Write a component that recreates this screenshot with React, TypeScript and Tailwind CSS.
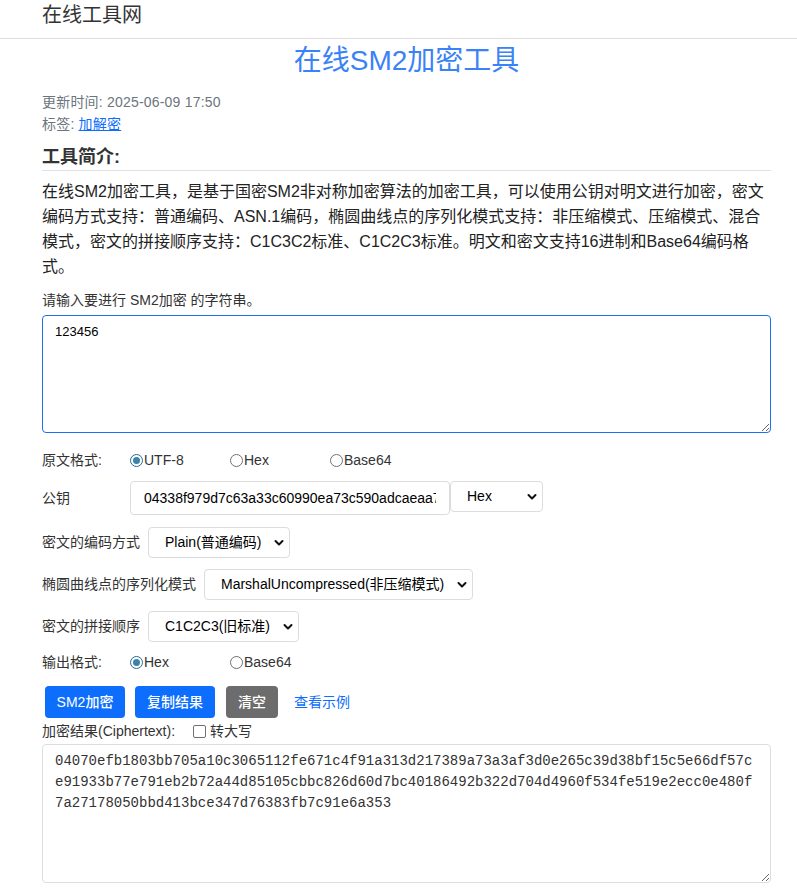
import React from 'react'

const cipher =
  '04070efb1803bb705a10c3065112fe671c4f91a313d217389a73a3af3d0e265c39d38bf15c5e66df57c\n' +
  'e91933b77e791eb2b72a44d85105cbbc826d60d7bc40186492b322d704d4960f534fe519e2ecc0e480f\n' +
  '7a27178050bbd413bce347d76383fb7c91e6a353'

function Chevron() {
  return (
    <svg className="pointer-events-none absolute right-[6px] top-1/2 -translate-y-1/2" width="10" height="7" viewBox="0 0 10 7" fill="none">
      <path d="M1.5 1.5l3.5 3.5 3.5-3.5" stroke="#111" strokeWidth="2" strokeLinecap="round" strokeLinejoin="round" />
    </svg>
  )
}

function Select({ value, width }: { value: string; width: string }) {
  return (
    <div className={`relative ${width}`}>
      <select
        defaultValue={value}
        className="h-[31px] w-full appearance-none rounded-[4px] border border-[#dcdcdc] bg-white pl-[16px] pr-[22px] text-[14px] text-black outline-none"
      >
        <option value={value}>{value}</option>
      </select>
      <Chevron />
    </div>
  )
}

function Radio({ label, checked }: { label: string; checked?: boolean }) {
  return (
    <label className="flex w-[100px] items-center">
      {checked ? (
        <span className="flex h-[13px] w-[13px] items-center justify-center rounded-full border border-[#2b6a8c] bg-white">
          <span className="h-[7px] w-[7px] rounded-full bg-[#3a83ab]" />
        </span>
      ) : (
        <span className="h-[13px] w-[13px] rounded-full border border-[#707070] bg-white" />
      )}
      <span className="ml-[1px] text-[14px] text-[#333]">{label}</span>
    </label>
  )
}

export default function App() {
  return (
    <div className="min-h-screen bg-white font-['Liberation_Sans','Noto_Sans_CJK_SC',sans-serif] text-[#212529]">
      {/* top bar */}
      <div className="h-[39px] border-b border-[#dddddd] pl-[42px]">
        <div className="text-[20px] leading-[30px] text-[#333]">在线工具网</div>
      </div>

      <div className="pl-[42px] pr-[26px]">
        <h1 className="pt-[4px] text-center text-[28px] font-normal leading-[36px] text-[#3a82f6]">在线SM2加密工具</h1>

        <div className="mt-[12px] text-[14px] leading-[22px] tracking-[0.2px] text-[#6c757d]">
          <div>更新时间: 2025-06-09 17:50</div>
          <div>
            标签: <a href="#" className="text-[#0d6efd] underline">加解密</a>
          </div>
        </div>

        <h2 className="mt-[9px] border-b border-[#dee2e6] text-[18px] font-bold leading-[26px] text-[#333]">工具简介:</h2>

        <p className="mt-[8px] whitespace-nowrap text-[16px] leading-[25px] text-[#222]">
          在线SM2加密工具，是基于国密SM2非对称加密算法的加密工具，可以使用公钥对明文进行加密，密文
          <br />
          编码方式支持：普通编码、ASN.1编码，椭圆曲线点的序列化模式支持：非压缩模式、压缩模式、混合
          <br />
          模式，密文的拼接顺序支持：C1C3C2标准、C1C2C3标准。明文和密文支持16进制和Base64编码格
          <br />
          式。
        </p>

        <div className="mt-[10px] text-[14px] leading-[22px] text-[#333]">请输入要进行 SM2加密 的字符串。</div>
        <textarea
          defaultValue="123456"
          className="mt-[4px] block h-[118px] w-full rounded-[4px] border border-[#1d6ff2] px-[12px] pt-[7px] text-[13px] leading-[18px] text-black outline-none"
        />

        {/* 原文格式 */}
        <div className="mt-[15px] flex h-[24px] items-center">
          <span className="w-[88px] text-[14px] text-[#333]">原文格式:</span>
          <Radio label="UTF-8" checked />
          <Radio label="Hex" />
          <Radio label="Base64" />
        </div>

        {/* 公钥 */}
        <div className="mt-[9px] flex items-start">
          <span className="w-[88px] text-[14px] leading-[34px] text-[#333]">公钥</span>
          <input
            defaultValue="04338f979d7c63a33c60990ea73c590adcaeaa7e5b8f3c2d1a0e9f8b7c6d5e4f3a2b1c0d9e8f7a6b5c4d3e2f1a"
            className="h-[34px] w-[320px] rounded-[4px] border border-[#dcdcdc] px-[13px] text-[14px] text-black outline-none"
          />
          <Select value="Hex" width="w-[93px]" />
        </div>

        <div className="mt-[12px] flex items-center gap-[8px]">
          <span className="text-[14px] text-[#333]">密文的编码方式</span>
          <Select value="Plain(普通编码)" width="w-[142px]" />
        </div>

        <div className="mt-[11px] flex items-center gap-[8px]">
          <span className="text-[14px] text-[#333]">椭圆曲线点的序列化模式</span>
          <Select value="MarshalUncompressed(非压缩模式)" width="w-[269px]" />
        </div>

        <div className="mt-[11px] flex items-center gap-[8px]">
          <span className="text-[14px] text-[#333]">密文的拼接顺序</span>
          <Select value="C1C2C3(旧标准)" width="w-[151px]" />
        </div>

        {/* 输出格式 */}
        <div className="mt-[8px] flex h-[24px] items-center">
          <span className="w-[88px] text-[14px] text-[#333]">输出格式:</span>
          <Radio label="Hex" checked />
          <Radio label="Base64" />
        </div>

        {/* buttons */}
        <div className="mt-[12px] ml-[3px] flex items-center gap-[10px]">
          <button className="h-[32px] w-[80px] rounded-[4px] bg-[#0d6efd] text-[14px] font-medium text-white">SM2加密</button>
          <button className="h-[32px] w-[80px] rounded-[4px] bg-[#0d6efd] text-[14px] font-medium text-white">复制结果</button>
          <button className="ml-[1px] h-[32px] w-[52px] rounded-[4px] bg-[#6c6c6c] text-[14px] font-medium text-white">清空</button>
          <a href="#" className="ml-[6px] text-[14px] text-[#0d6efd]">查看示例</a>
        </div>

        <div className="mt-[3px] flex h-[20px] items-center text-[14px] text-[#333]">
          <span>加密结果(Ciphertext):</span>
          <span className="ml-[18px] mr-[4px] h-[13px] w-[13px] rounded-[2px] border border-[#707070] bg-white" />
          <span>转大写</span>
        </div>

        <textarea
          readOnly
          value={cipher}
          className="mt-[3px] block h-[139px] w-full rounded-[4px] border border-[#dddddd] px-[12px] pt-[6px] font-['Liberation_Mono',monospace] text-[14px] leading-[21px] text-[#333] outline-none"
        />
      </div>
    </div>
  )
}
